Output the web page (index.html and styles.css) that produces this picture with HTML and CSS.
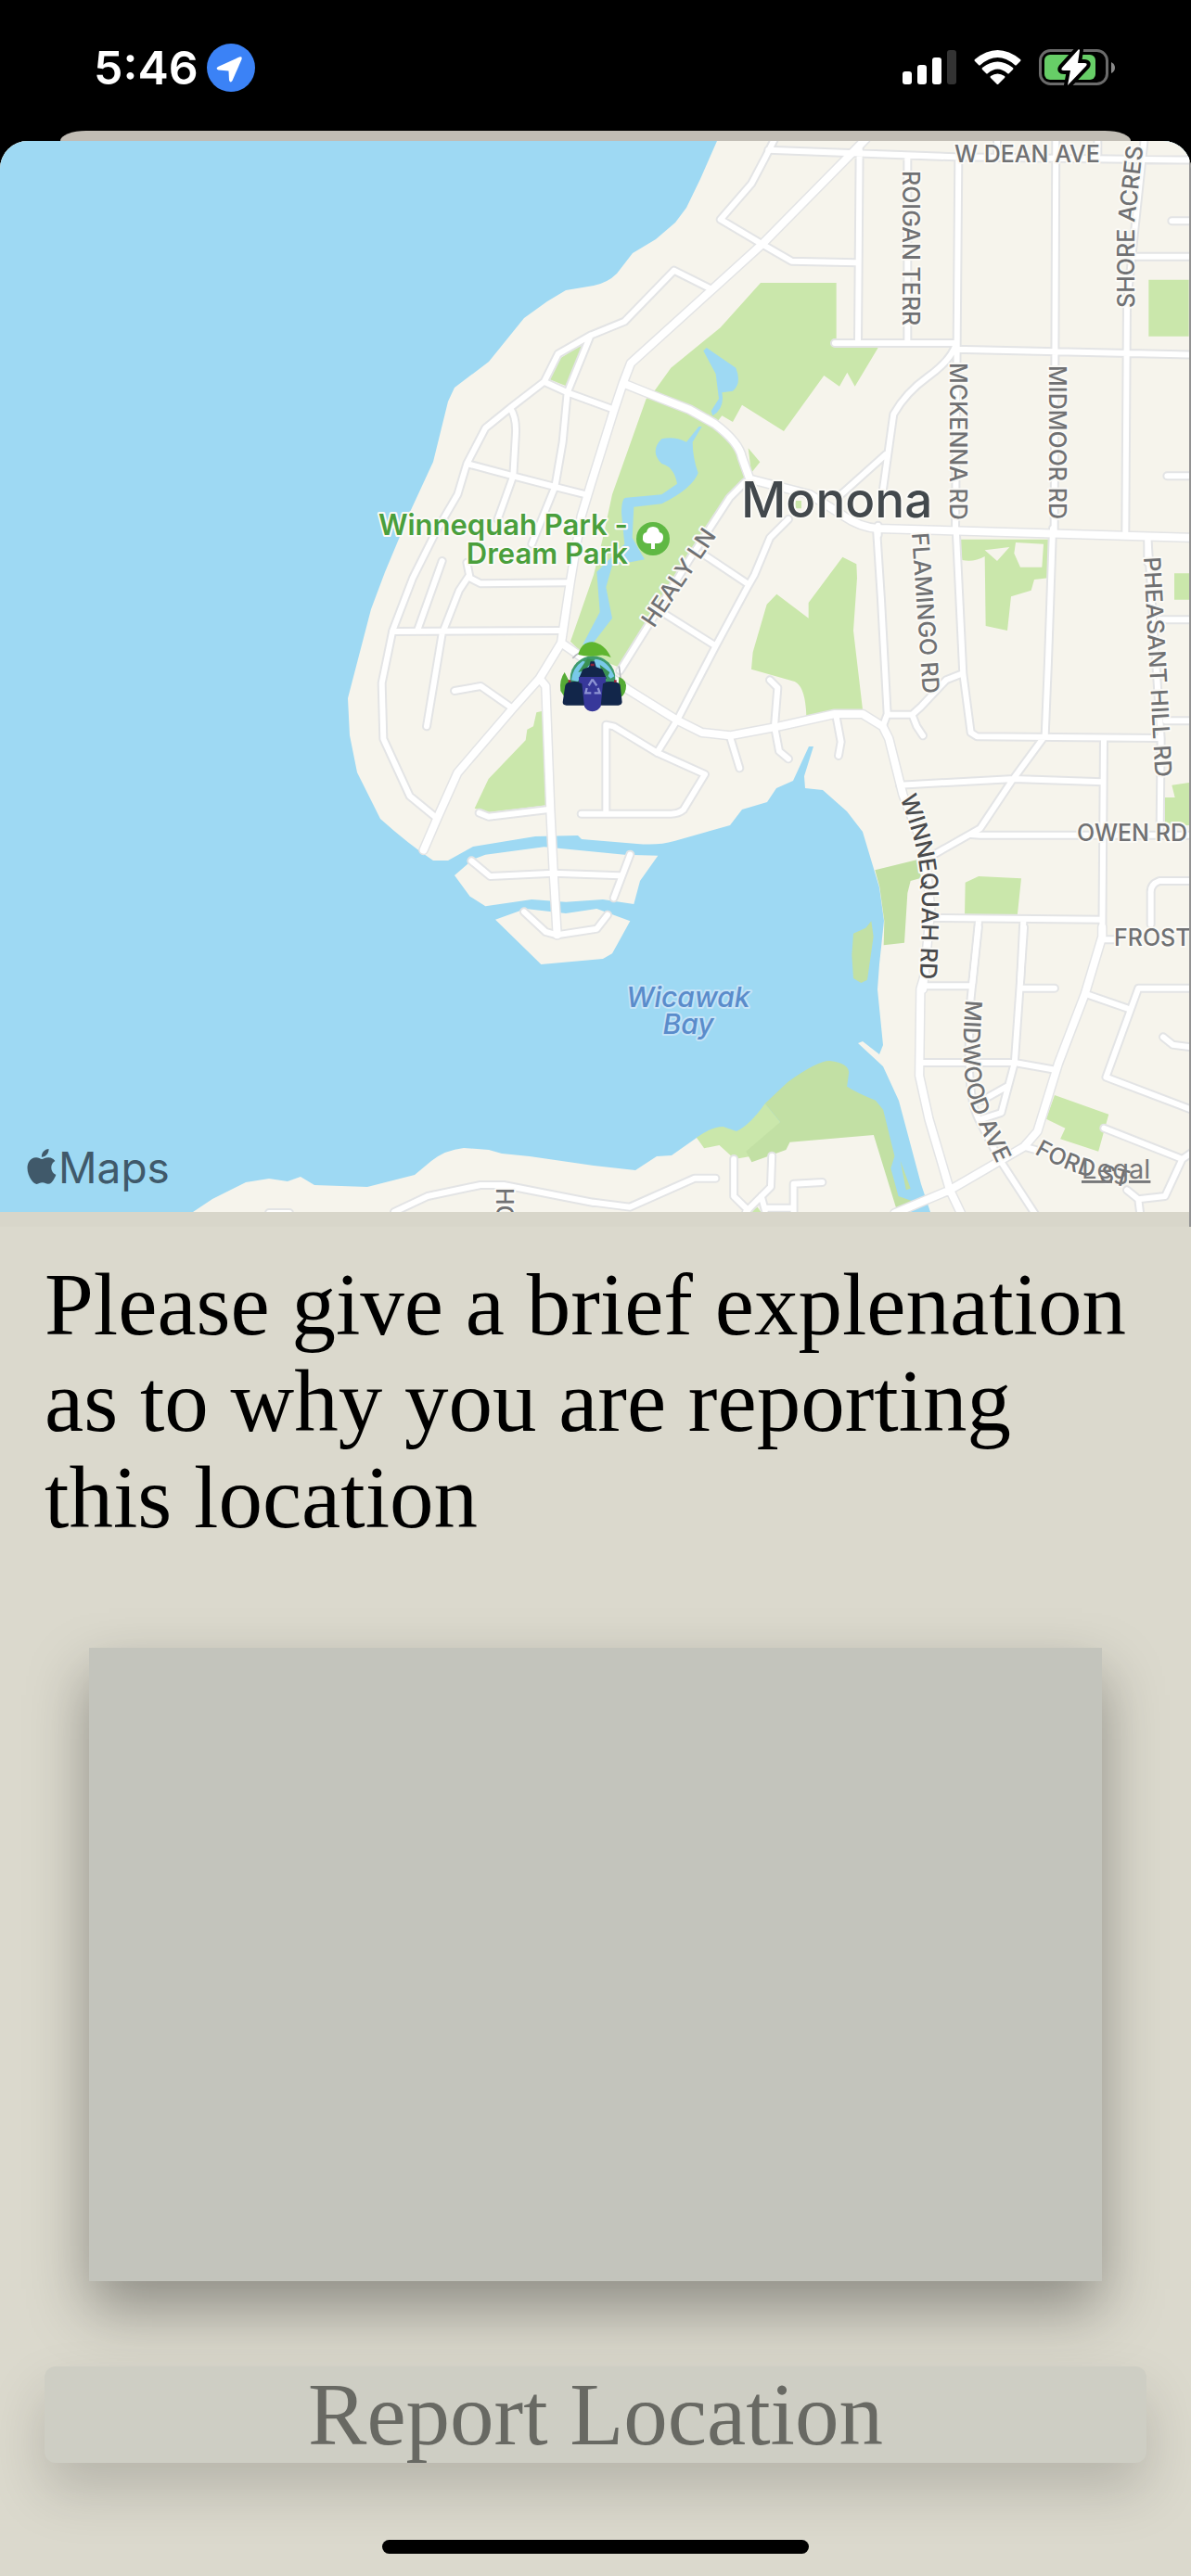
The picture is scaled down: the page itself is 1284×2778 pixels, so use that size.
FILE: index.html
```html
<!DOCTYPE html>
<html lang="en">
<head>
<meta charset="utf-8">
<meta name="viewport" content="width=device-width, initial-scale=1">
<title>Report Location</title>
<link rel="stylesheet" href="styles.css">
</head>
<body>
<header class="status">
  <div class="status-left">
    <span class="time">5:46</span>
    <svg class="locator" viewBox="0 0 52 52" aria-hidden="true"><circle cx="26" cy="26" r="26" fill="#3b82f6"/><path d="M12 25 L35 14.500 Q38.500 13.500 37.500 17 L27.500 40 Q25.500 43 24 39.500 L23.500 29.500 L12.500 28.500 Q9 27 12 25Z" fill="#fff"/></svg>
  </div>
  <div class="status-right">
    <svg class="signal" viewBox="0 0 58 38" aria-hidden="true"><rect y="23" width="10" height="14" rx="3" fill="#fff"/><rect x="16" y="16" width="10" height="21" rx="3" fill="#fff"/><rect x="32" y="8" width="10" height="29" rx="3" fill="#fff"/><rect x="48" width="10" height="37" rx="3" fill="#333"/></svg>
    <svg class="wifi" viewBox="0 0 51 38" aria-hidden="true"><g fill="#fff"><path d="M1 10 Q25.500 -10 50 10 Q51 11 50 12 L46 16 Q45 17 44 16 Q25.500 0 7 16 Q6 17 5 16 L1 12 Q0 11 1 10Z"/><path d="M9 19 Q25.500 6 42 19 Q43 20 42 21 L38 25 Q37 26 36 25 Q25.500 16 15 25 Q14 26 13 25 L9 21 Q8 20 9 19Z"/><path d="M18 28 Q25.500 23 33 28 Q34 29 33 30 L26.500 36.500 Q25.500 37.500 24.500 36.500 L18 30 Q17 29 18 28Z"/></g></svg>
    <svg class="battery" viewBox="0 0 82 40" aria-hidden="true"><rect x="1.500" y="1.500" width="72" height="36" rx="11" fill="none" stroke="#6b6b6b" stroke-width="3"/><path d="M78 14 Q82 16 82 20 Q82 24 78 26Z" fill="#8a8a8a"/><rect x="6" y="6" width="55" height="27" rx="6" fill="#67ce67"/><path d="M43 0 L25 20 Q23 23 27 23 H34 L31 39 L51 18 Q53 15 49 15 H42 L44 1Z" fill="#fff" stroke="#000" stroke-width="8" stroke-linejoin="round" paint-order="stroke"/></svg>
  </div>
</header>
<div class="backdrop"></div>
<main class="sheet">
<figure class="map">
<svg class="map-art" viewBox="0 152 1282 1155" role="img" aria-label="Map of Monona">
<defs>
  <g id="minor">
    <g transform="translate(360 140) scale(.33333)">
      <path d="M1430 20L1395 90 1350 175 1250 290 1385 370M1220 515L1100 455 940 620 830 665 725 725 680 815 570 900 490 965 430 1080 400 1180 330 1300 255 1450 190 1620 155 1790 160 1970 245 2155 330 2225M830 665L755 850 740 1010 715 1155 640 1340M680 815L755 850 905 905M570 900Q590 930 588 980L580 1120 530 1260M430 1080L580 1120 715 1155 815 1180M1330 1140L1280 1190 1150 1390 925 1750M1190 1370L1340 1470M1060 1560L1235 1670M1470 1260L1410 1320 1360 1440 1340 1475 1235 1670 1110 1910 1045 2015"/>
    </g>
    <g transform="translate(360 580) scale(.33333)">
      <path d="M350 75L270 300M430 80L440 130 475 148 755 145M435 125L405 170 370 260 350 310 300 610M190 303L735 300M390 495L475 480 575 550M470 890L500 902 700 878M880 890V605L905 610 1045 695 1200 765 1130 880Q1115 893 1090 893H800M1280 640L1312 745M445 1045L505 1095 710 1085 925 1093M958 1025L905 1165M615 1210L685 1275 722 1285 850 1265 885 1220"/>
    </g>
    <g transform="translate(800 580) scale(.33333)">
      <path d="M90 460L115 485 105 610 120 690 150 715M305 580L320 660 312 705M435 -30L450 200 470 570 455 610M470 572H550L580 545 660 460 710 440M550 572L565 610 585 640M692 -30L715 440 740 630 760 643 1350 648M1005 -30L990 400 980 640 870 790 770 940 620 1025M510 800L880 780 1165 790M740 960L770 962H1460M1170 650L1165 1300M620 1230L1165 1235M765 1240L745 1440M910 1240L900 1440M1460 1110H1350Q1320 1120 1322 1150V1250M1165 1300H1210M1312 0L1355 650 1352 940M1350 265H1460M1370 592H1460"/>
    </g>
    <g transform="translate(800 140) scale(.33333)">
      <path d="M85 65L690 88 1460 98M380 60L375 685M300 690H690M690 710L1460 728M535 90V685M700 90L690 1300M1015 0L1010 1300M1300 40L1245 560 1240 1300M65 370L160 425 370 430M690 700Q670 750 600 800T490 920L455 1170M465 1050L320 1180M440 1280V1310M1390 295H1460M1270 410H1460M1375 1120H1460M825 30V80M1150 30V80M1312 1320V1400"/>
    </g>
    <g transform="translate(640 1000) scale(.41070 .33333)">
      <path d="M865 190H990M1010 0L990 230 985 400Q985 560 1010 620L1065 750 1160 930M865 438H1105L1215 462M1130 0L1105 438 1070 600 1020 620M1085 515L1020 560M1120 197H1210M1290 215L1400 262M1580 197H1430L1345 485 1580 595M1495 355L1520 380 1580 390M1340 650L1545 750 1500 870 1430 880 1435 930M1430 880L1400 850M1545 750L1580 720M1130 710L1160 720M0 890L95 905 265 812H320M368 750V870L405 915M468 740L465 840 400 920M440 870L450 915M450 908H520M525 930V830L600 825"/>
    </g>
    <path d="M425 1307L461 1290 518 1278 543 1278 640 1297M290 1308H312"/>
  </g>
  <g id="major">
    <g transform="translate(360 140) scale(.33333)">
      <path d="M1720 30L1385 370 1225 515 960 755 935 820 905 910 830 1150 800 1250 765 1460 735 1660 665 1775 580 1870 400 2080 335 2225 290 2330M935 820L1060 870 1150 905 1230 950Q1310 1010 1320 1060L1345 1130 1540 1180 1650 1250Q1700 1285 1760 1290L2780 1320M735 1660L950 1810 1110 1910 1190 1950 1280 1960 1440 1930 1620 1890H1710L1775 1930 1795 1970 1840 2150 1910 2330 1930 2520 1905 2780M665 1775L685 1800 700 2200 710 2400 722 2605"/>
    </g>
    <g transform="translate(640 1000) scale(.41070 .33333)">
      <path d="M870 150L858 200 855 480 880 620 935 850 970 940M790 925L935 850 1130 710 1165 660 1220 440 1290 215 1335 30V0"/>
    </g>
  </g>
  <path id="p-shore" d="M1223 332L1223 240L1239 100"/>
  <path id="p-winn" d="M970 860Q990 910 993 950T988 1120"/>
  <path id="p-mid" d="M1041 1078Q1034 1160 1048 1195T1097 1300"/>
  <path id="p-ford" d="M1115 1244Q1165 1273 1260 1290"/>
</defs>

<rect class="water" y="152" width="1284" height="1155"/>
<path class="land" d="M773 152L755 193 740 224 728 240 707 258 682 273 665 295Q655 305 640 308L610 313 590 325 565 343 527 390 490 418 483 433 467 498 443 550 415 617 400 657 375 753 377 793 385 833 410 883Q440 910 467 928H483L510 913 577 902 623 901 627 905 687 910Q710 912 727 907L787 890 800 873 827 865 837 850 855 842 872 805H877L867 837 868 850 887 852 913 875 930 897 942 937 948 957 953 993 948 1040 946 1067 952 1127 948 1137 930 1123 925 1125 952 1150 969 1187 993 1277 1003 1307H1284V152Z"/>
<path class="land" d="M208 1307L229 1293 265 1275 290 1271 310 1274 324 1269 339 1278 396 1280 447 1267 465 1252Q480 1240 500 1238L527 1240 541 1244 571 1247 640 1257 685 1262 708 1247 724 1246 751 1227 944 1223 968 1307Z"/>

<g transform="translate(360 140) scale(.33333)">
  <path class="park" d="M1380 495H1625V690L1760 705 1685 830 1660 785 1635 830 1585 795 1455 975 1320 890 1290 945 1255 925 1235 950 1310 1030 1345 1130 1280 1200 925 1740 800 1690 765 1655 840 1440 870 1320 900 1180 1010 870 1040 840 1090 770 1250 640Z"/>
  <path class="park" d="M810 690L755 830 690 805 730 740ZM1340 1030L1378 1075 1350 1110ZM1487 1200h25v25h-25ZM2635 485H2765V668H2635Z"/>
  <path class="water" d="M1205 705L1300 770Q1320 820 1290 845L1255 850Q1265 900 1225 925L1220 910 1245 870 1235 790 1195 715ZM1190 960L1160 1010Q1160 1060 1178 1110Q1160 1160 1060 1210L970 1220 965 1320 1005 1390 900 1410 880 1480 900 1580 835 1665H805L860 1560 850 1430 940 1340 930 1240Q930 1190 945 1190L1060 1180 1110 1145Q1100 1090 1060 1080Q1020 1040 1060 1000Q1100 990 1140 1010L1180 960Z"/>
</g>
<g transform="translate(360 580) scale(.33333)">
  <path class="park" d="M655 565L675 560 690 865 500 888 455 875 500 780 620 655 625 620 645 610Z"/>
  <path class="land" d="M450 1040L490 1025 680 1000 940 1025 1048 1028 990 1110 970 1185 870 1170 750 1178 640 1170 490 1192 440 1160 390 1092ZM522 1235L620 1200 750 1215 850 1200 958 1240 900 1345 870 1362 670 1380Z"/>
</g>
<g transform="translate(800 580) scale(.33333)">
  <path class="park" d="M325 62L370 85 372 130 360 300 390 555 208 578Q205 480 170 465L30 425 35 370 80 215 112 182 215 260V210ZM705 5H990V130L945 135 935 170 870 190 858 300 788 285 785 60Q750 80 712 72ZM1398 115H1446V200H1398ZM1390 800L1446 792V930H1368V840H1400ZM722 1115L765 1095 903 1102 890 1225H720Z"/>
  <path class="land" d="M785 40L865 30 825 75ZM885 15L975 20 970 95 900 95 880 50Z"/>
  <path class="park-shade" d="M430 1075L565 1042 580 1100 545 1110 535 1150 525 1310 458 1318 460 1240 445 1130ZM360 1280L400 1262 418 1240 425 1290 405 1430 385 1440 360 1425 355 1350Z"/>
</g>
<g transform="translate(640 1000) scale(.41070 .33333)">
  <path class="park" d="M270 680Q310 645 340 645L375 660Q410 640 450 570L490 630 415 740 370 750 330 705 290 715ZM1210 543L1352 605 1325 725 1225 685 1238 650 1188 620ZM405 920L430 905 440 922Z"/>
  <path class="park-shade" d="M450 570L510 500Q590 430 620 432Q670 440 670 470L665 515Q690 535 740 560L760 590 790 740 780 780 800 870 835 885 795 912 735 672 515 695 505 720 415 760 400 725 490 630ZM805 755L832 845 820 850Z"/>
</g>

<use href="#minor" class="casing minor-casing"/>
<use href="#major" class="casing major-casing"/>
<use href="#minor" class="road minor-road"/>
<use href="#major" class="road major-road"/>

<g class="street">
  <text x="1029" y="175">W DEAN AVE</text>
  <text transform="translate(973 184) rotate(90)">ROIGAN TERR</text>
  <text transform="translate(1024 391) rotate(90)">MCKENNA RD</text>
  <text transform="translate(1131 394) rotate(90)">MIDMOOR RD</text>
  <text transform="translate(983 575) rotate(86)">FLAMINGO RD</text>
  <text><textPath href="#p-shore">SHORE ACRES</textPath></text>
  <text transform="translate(1233 601) rotate(87)">PHEASANT HILL RD</text>
  <text x="1161" y="907">OWEN RD</text>
  <text x="1201" y="1020">FROST</text>
  <text><textPath href="#p-mid">MIDWOOD AVE</textPath></text>
  <text><textPath href="#p-ford">FORD ST</textPath></text>
  <text transform="translate(535 1281) rotate(90)">HO</text>
  <text transform="translate(705 678) rotate(-56)">HEALY LN</text>
  <text class="dark"><textPath href="#p-winn">WINNEQUAH RD</textPath></text>
</g>
<text class="city" x="799" y="558">Monona</text>
<g class="park-name"><text x="677" y="577">Winnequah Park -</text><text x="677" y="608">Dream Park</text></g>
<g class="bay"><text x="742" y="1086">Wicawak</text><text x="742" y="1115">Bay</text></g>

<g>
  <circle cx="704" cy="581" r="18" fill="#5fb843"/>
  <path d="M702 592V586H698Q692 585 693 579Q693 575 697 574Q698 568 704 568Q710 568 711 574Q715 575 715 579Q715 585 710 586H706V592Z" fill="#fff"/>
</g>

<g transform="translate(580 670) scale(.33333)">
  <path d="M112 120Q130 98 160 95M262 145L268 190" fill="none" stroke="#b9bcc0" stroke-width="5"/>
  <circle cx="177" cy="185" r="73" fill="#3f9b6c"/>
  <path d="M108 190Q112 150 145 128L175 140 185 122Q225 125 247 178L235 185 208 160 190 165 150 165 128 195Z" fill="#79c9e8"/>
  <path d="M130 165L160 120 180 125 150 160ZM200 140L232 165 225 180 205 165Z" fill="#3a9152"/>
  <path d="M130 108Q140 68 175 67Q215 72 236 117Q215 105 190 112Q155 115 130 108Z" fill="#5fb52f"/>
  <path d="M86 165Q68 190 73 225L88 248 104 200ZM262 180Q290 190 284 220Q278 248 258 248Z" fill="#55ab35"/>
  <path d="M132 185L145 155 165 148 170 130H183L188 148 208 155 222 185Z" fill="#12264a"/>
  <path d="M88 208Q92 192 132 196H220Q260 192 266 206L272 262Q270 272 260 272H92Q80 272 80 262Z" fill="#12264a"/>
  <path d="M132 180H219V198L210 202 203 275Q195 290 176 292Q156 290 150 275L142 202 132 198Z" fill="#37389a"/>
  <path d="M176 188L164 208M176 188L190 208M158 216L154 232H172M194 216L200 232H182" fill="none" stroke="#8d93d3" stroke-width="7"/>
  <path d="M170 137h12v8h-12ZM98 190h8v8h-8ZM246 190h8v8h-8Z" fill="#8f2438"/>
</g>

<path transform="translate(26 1239) scale(1.58)" fill="#40596a" d="M12.152 6.896c-.948 0-2.415-1.078-3.960-1.040-2.040.027-3.910 1.183-4.961 3.014-2.117 3.675-.546 9.103 1.519 12.090 1.013 1.454 2.208 3.090 3.792 3.039 1.520-.065 2.090-.987 3.935-.987 1.831 0 2.350.987 3.960.948 1.637-.026 2.676-1.480 3.676-2.948 1.156-1.688 1.636-3.325 1.662-3.415-.039-.013-3.182-1.221-3.220-4.857-.026-3.040 2.480-4.494 2.597-4.559-1.429-2.090-3.623-2.324-4.390-2.376-2-.156-3.675 1.090-4.610 1.090zM15.530 3.830c.843-1.012 1.400-2.427 1.245-3.830-1.207.052-2.662.805-3.532 1.818-.780.896-1.454 2.338-1.273 3.714 1.338.104 2.715-.688 3.559-1.701"/>
<text class="brand" x="63" y="1276">Maps</text>
<a href="#legal"><text class="legal" x="1166" y="1271">Legal</text></a>
</svg>
</figure>
<form class="report">
  <label class="prompt" for="reason">Please give a brief explenation<br>as to why you are reporting<br>this location</label>
  <textarea class="reason" id="reason"></textarea>
  <button class="submit" type="button">Report Location</button>
</form>
<div class="home-bar"></div>
</main>
</body>
</html>
```

FILE: styles.css
```css
* { box-sizing: border-box; }
body { margin: 0; background: #000; font-family: Inter, "Liberation Sans", sans-serif; }

.status { height: 141px; padding: 5px 82px 0 101px; display: flex; align-items: center; justify-content: space-between; color: #fff; }
.status-left, .status-right { display: flex; align-items: center; }
.status-left { gap: 9px; }
.status-right { gap: 19px; }
.time { font-size: 50px; line-height: 52px; font-weight: 600; }
.locator { width: 52px; height: 52px; }
.signal { width: 58px; height: 38px; }
.wifi { width: 51px; height: 38px; }
.battery { width: 82px; height: 40px; }

.backdrop { height: 11px; margin: 0 65px; background: #c1bdb5; border-radius: 28px 28px 0 0 / 11px 11px 0 0; }

.sheet { background: #dbd9cd; border-radius: 30px 30px 0 0; overflow: hidden; padding-bottom: 24px; }
.map { margin: 0; padding-bottom: 16px; background: #d8d6ca; border-right: 2px solid #929292; }
.map-art { display: block; width: 100%; height: auto; }

.water { fill: #9ed9f3; }
.land { fill: #f6f4ec; }
.park { fill: #cae7ab; }
.park-shade { fill: #c2e0a4; }
#minor path, #major path { vector-effect: non-scaling-stroke; }
.casing, .road { fill: none; stroke-linecap: round; stroke-linejoin: round; }
.casing { stroke: #e3e4e5; }
.road { stroke: #fff; }
.minor-casing { stroke-width: 10px; }
.minor-road { stroke-width: 6px; }
.major-casing { stroke-width: 11px; }
.major-road { stroke-width: 8px; }

.map-art text { paint-order: stroke; stroke: #fbfaf6; stroke-width: 4px; stroke-linejoin: round; }
.street { font-size: 25px; font-weight: 500; fill: #707173; }
.street .dark { fill: #4a4b4d; }
.city { font-size: 53px; font-weight: 500; fill: #42484c; }
.park-name { font-size: 31px; font-weight: 600; fill: #4a9f3c; text-anchor: end; }
.bay { font-size: 30px; font-weight: 500; font-style: italic; fill: #5a8ccb; text-anchor: middle; }
.map-art .bay text { stroke: #c4e3f7; }
.map-art .brand { font-size: 46px; fill: #40596a; stroke: none; }
.map-art .legal { font-size: 29px; fill: #77787a; stroke: none; text-decoration: underline; }

.report { display: flex; flex-direction: column; padding: 32px 48px 0; }
.prompt { font-family: "Liberation Serif", serif; font-size: 95px; line-height: 104px; color: #000; }
.reason { height: 683px; margin: 110px 48px 0; padding: 24px; border: 0; border-radius: 0; resize: none; outline: 0; background: #c3c4bc; font: 48px/60px "Liberation Serif", serif; box-shadow: 0 30px 60px rgba(0, 0, 0, .35); }
.submit { height: 104px; margin-top: 92px; padding: 0; border: 0; border-radius: 12px; background: #cecec4; color: #686963; font: 95px/104px "Liberation Serif", serif; box-shadow: 0 30px 60px rgba(0, 0, 0, .17); }
.home-bar { width: 460px; height: 15px; margin: 83px auto 0; border-radius: 8px; background: #000; }
```
